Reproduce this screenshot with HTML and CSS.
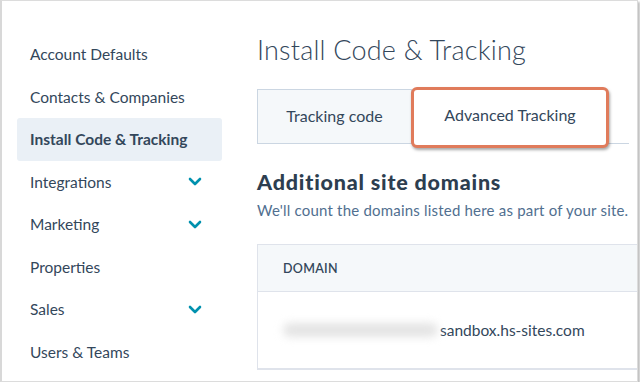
FILE: index.html
```html
<!DOCTYPE html>
<html lang="en">
<head>
  <meta charset="UTF-8">
  <title>Install Code &amp; Tracking</title>
  <link rel="stylesheet" href="styles.css">
</head>
<body>
  <div class="frame">
    <nav class="sidebar">
      <div class="nav-item">Account Defaults</div>
      <div class="nav-item">Contacts &amp; Companies</div>
      <div class="nav-item active">Install Code &amp; Tracking</div>
      <div class="nav-item">Integrations <svg class="chev" width="14" height="9" viewBox="0 0 14 9"><path d="M2 2l5 5 5-5" fill="none" stroke="#0091ae" stroke-width="2.6" stroke-linecap="round" stroke-linejoin="round"/></svg></div>
      <div class="nav-item">Marketing <svg class="chev" width="14" height="9" viewBox="0 0 14 9"><path d="M2 2l5 5 5-5" fill="none" stroke="#0091ae" stroke-width="2.6" stroke-linecap="round" stroke-linejoin="round"/></svg></div>
      <div class="nav-item">Properties</div>
      <div class="nav-item">Sales <svg class="chev" width="14" height="9" viewBox="0 0 14 9"><path d="M2 2l5 5 5-5" fill="none" stroke="#0091ae" stroke-width="2.6" stroke-linecap="round" stroke-linejoin="round"/></svg></div>
      <div class="nav-item">Users &amp; Teams</div>
    </nav>
    <main class="content">
      <h1>Install Code &amp; Tracking</h1>
      <div class="tabs">
        <div class="tab">Tracking code</div>
        <div class="tab current">Advanced Tracking</div>
      </div>
      <h2>Additional site domains</h2>
      <p class="hint">We'll count the domains listed here as part of your site.</p>
      <div class="table">
        <div class="thead">DOMAIN</div>
        <div class="row">
          <span class="blur"></span><span class="domain">sandbox.hs-sites.com</span>
        </div>
      </div>
    </main>
  </div>
</body>
</html>
```

FILE: styles.css
```css
body {
  margin: 0;
  background: #fff;
  font-family: Lato, 'Open Sans', sans-serif;
  color: #33475b;
}
.frame {
  width: 635px;
  height: 380px;
  border: 1px solid #dcdcdc;
  border-left: 2px solid #d8d8d8;
  box-shadow: 2px 2px 2px rgba(0, 0, 0, 0.25);
  overflow: hidden;
  display: flex;
  background: #fff;
}
.sidebar {
  width: 205px;
  padding: 32px 0 0 15px;
  flex-shrink: 0;
}
.nav-item {
  height: 42.5px;
  padding: 0 19px 0 13px;
  display: flex;
  align-items: center;
  justify-content: space-between;
  font-size: 15.5px;
  color: #33475b;
  border-radius: 3px;
}
.nav-item.active {
  background: #eaf0f6;
  font-weight: 700;
}
.chev {
  display: block;
  margin-right: 1px;
}
.content {
  flex: 1;
  padding-left: 35px;
  min-width: 0;
}
h1 {
  margin: 33px 0 0;
  font-size: 27px;
  font-weight: 300;
  line-height: 32px;
  letter-spacing: 0.2px;
}
.tabs {
  margin-top: 23px;
  display: flex;
  height: 54px;
  border-bottom: 1px solid #cbd6e2;
  margin-right: 8px;
}
.tab {
  display: flex;
  align-items: center;
  justify-content: center;
  font-size: 16px;
  box-sizing: border-box;
  padding-bottom: 2px;
}
.tab:first-child {
  width: 155px;
  background: #f5f8fa;
  border: 1px solid #cbd6e2;
  border-bottom: none;
}
.tab.current {
  width: 198px;
  margin: -2px 0 -5px -1px;
  padding-bottom: 6px;
  background: #fff;
  border: 3px solid #e07b5b;
  border-radius: 6px;
  box-shadow: 1px 2px 3px rgba(0, 0, 0, 0.35);
  position: relative;
}
h2 {
  margin: 25px 0 0;
  font-size: 21.5px;
  font-weight: 900;
  line-height: 26px;
  letter-spacing: 0.8px;
  color: #2d3e50;
}
.hint {
  margin: 6px 0 0;
  font-size: 15px;
  letter-spacing: 0.2px;
  color: #516f90;
  white-space: nowrap;
}
.table {
  margin-top: 25px;
  border: 1px solid #dfe3eb;
  border-right: none;
}
.thead {
  height: 46px;
  display: flex;
  align-items: center;
  padding-left: 25px;
  background: #f5f8fa;
  border-bottom: 1px solid #dfe3eb;
  font-size: 12.5px;
  font-weight: 600;
  letter-spacing: 0.3px;
  color: #33475b;
}
.row {
  height: 76px;
  display: flex;
  align-items: center;
  padding-left: 25px;
  border-bottom: 1px solid #dfe3eb;
  font-size: 15.5px;
}
.blur {
  width: 155px;
  height: 14px;
  background: #e4e4e4;
  border-radius: 7px;
  filter: blur(4px);
}
.domain {
  margin-left: 2px;
}
```
